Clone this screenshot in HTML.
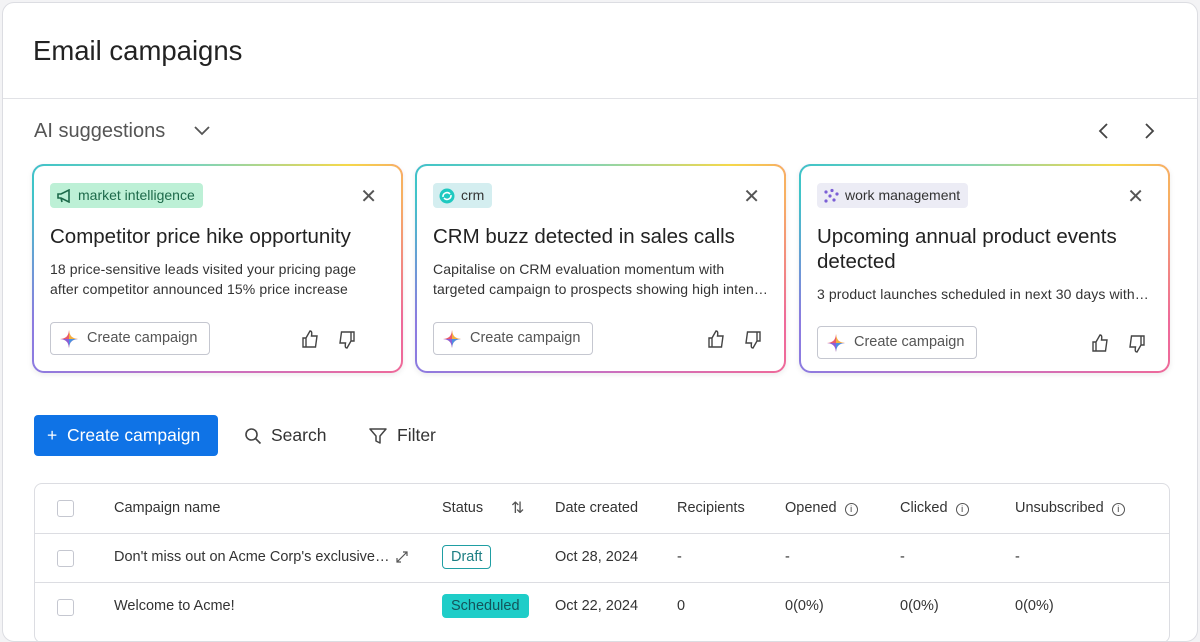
<!DOCTYPE html>
<html><head><meta charset="utf-8"><style>
*{box-sizing:border-box;margin:0;padding:0}
body{width:1200px;height:628px;background:#f3f3f5;font-family:"Liberation Sans",sans-serif;color:#323338;overflow:hidden;position:relative}
.frame{position:absolute;left:2px;top:2px;width:1196px;height:640px;background:#fff;border:1px solid #dcdde2;border-radius:12px;overflow:hidden}
.abs{position:absolute}
h1{position:absolute;left:30px;top:32px;font-size:27.5px;font-weight:400;color:#222}
.hr{position:absolute;left:0;top:95px;width:100%;height:1px;background:#e1e2e6}
.ai{left:31px;top:117px;font-size:20px;color:#555}
.card{position:absolute;top:161px;width:371px;height:209px;border-radius:12px;padding:2px;background:linear-gradient(90deg,#8c7be0,#c86fc0 50%,#ee6a9a);box-shadow:0 2px 6px rgba(0,0,0,.08)}
.card::before{content:"";position:absolute;inset:0;border-radius:12px;background:linear-gradient(90deg,#3fc4c8 0%,#7fd4b8 45%,#f5d84a 85%,#f7b062 100%);-webkit-mask-image:linear-gradient(180deg,#000 15%,transparent 75%);mask-image:linear-gradient(180deg,#000 15%,transparent 75%)}
.in{position:relative;background:#fff;border-radius:10px;width:100%;height:100%}
.tag{position:absolute;left:16px;top:17px;height:25px;border-radius:4px;padding:0 8px 0 6px;font-size:14px;line-height:25px;display:flex;align-items:center;gap:6px}
.x{position:absolute;right:24px;top:18px;font-size:20px;color:#555}
.ttl{position:absolute;left:16px;top:58px;font-size:20.5px;color:#222;width:345px;line-height:25px}
.dsc{position:absolute;left:16px;font-size:14px;line-height:20px;color:#333;white-space:nowrap;letter-spacing:.1px}
.btn{position:absolute;left:16px;height:33px;border:1px solid #c5c7d0;border-radius:4px;padding:0 12px 0 36px;font-size:14.5px;line-height:31px;color:#555}
.star{position:absolute;left:9px;top:7px}
.tb{position:absolute;left:31px;top:480px;width:1136px;height:160px;border:1px solid #dcdde2;border-radius:8px}
.row{position:absolute;left:0;width:100%;border-top:1px solid #dcdde2}
.cb{position:absolute;left:22px;width:17px;height:17px;border:1px solid #c5c7d0;border-radius:3px}
.c{position:absolute;font-size:14.5px;color:#333}
.i{border:1.3px solid #555;border-radius:50%;display:inline-block;width:13px;height:13px;line-height:11px;text-align:center;font-size:9px;margin-left:4px}
</style></head><body><div class="frame">
<h1>Email campaigns</h1>
<div class="hr"></div>
<div class="abs ai">AI suggestions</div>
<svg class="abs" style="left:190px;top:120px" width="18" height="14"><path d="M2 4l7 7 7-7" fill="none" stroke="#555" stroke-width="1.8"/></svg>
<svg class="abs" style="left:1094px;top:118px" width="14" height="20"><path d="M10 3l-7 7 7 7" fill="none" stroke="#444" stroke-width="1.8"/></svg>
<svg class="abs" style="left:1139px;top:118px" width="14" height="20"><path d="M4 3l7 7-7 7" fill="none" stroke="#444" stroke-width="1.8"/></svg>

<div class="card" style="left:29px"><div class="in">
<div class="tag" style="background:#bdf0d6;color:#1d6a4a"><svg width="16" height="14"><path d="M2 5h3l8-4v12l-8-4H2z M5 9l1 4" fill="none" stroke="#1d6a4a" stroke-width="1.6"/></svg>market intelligence</div>
<div class="x">✕</div>
<div class="ttl">Competitor price hike opportunity</div>
<div class="dsc" style="top:93px">18 price-sensitive leads visited your pricing page<br>after competitor announced 15% price increase</div>
<div class="btn" style="top:156px"><svg class="star" width="18" height="18"><path d="M9 0C9.5 6 12 8.5 18 9 12 9.5 9.5 12 9 18 8.5 12 6 9.5 0 9 6 8.5 8.5 6 9 0z" fill="#e85b6c"/><path d="M9 9V0c.5 6 3 8.5 9 9z" fill="#f4b13d"/><path d="M9 9h9c-6 .5-8.5 3-9 9z" fill="#4a90e2"/><path d="M9 9v9C8.5 12 6 9.5 0 9z" fill="#8a5fd8"/></svg>Create campaign</div>
<svg class="abs" style="left:267px;top:164px" width="18" height="18"><path d="M2 8h3v9H2z M5 8l4-7c2 0 2 2 1.5 5H16l-1.5 11H5" fill="none" stroke="#444" stroke-width="1.4"/></svg>
<svg class="abs" style="left:304px;top:165px" width="18" height="18"><path d="M16 10h-3V1h3z M13 10l-4 7c-2 0-2-2-1.5-5H2L3.5 1H13" fill="none" stroke="#444" stroke-width="1.4"/></svg>
</div></div>

<div class="card" style="left:412px"><div class="in">
<div class="tag" style="background:#d4eef0;color:#333"><svg width="16" height="16"><circle cx="8" cy="8" r="7.5" fill="#1fc9c0"/><path d="M4 9a4 4 0 0 1 7-3M12 7a4 4 0 0 1-7 3" stroke="#fff" stroke-width="1.6" fill="none"/></svg>crm</div>
<div class="x">✕</div>
<div class="ttl">CRM buzz detected in sales calls</div>
<div class="dsc" style="top:93px">Capitalise on CRM evaluation momentum with<br>targeted campaign to prospects showing high inten…</div>
<div class="btn" style="top:156px"><svg class="star" width="18" height="18"><path d="M9 0C9.5 6 12 8.5 18 9 12 9.5 9.5 12 9 18 8.5 12 6 9.5 0 9 6 8.5 8.5 6 9 0z" fill="#e85b6c"/><path d="M9 9V0c.5 6 3 8.5 9 9z" fill="#f4b13d"/><path d="M9 9h9c-6 .5-8.5 3-9 9z" fill="#4a90e2"/><path d="M9 9v9C8.5 12 6 9.5 0 9z" fill="#8a5fd8"/></svg>Create campaign</div>
<svg class="abs" style="left:290px;top:164px" width="18" height="18"><path d="M2 8h3v9H2z M5 8l4-7c2 0 2 2 1.5 5H16l-1.5 11H5" fill="none" stroke="#444" stroke-width="1.4"/></svg>
<svg class="abs" style="left:327px;top:165px" width="18" height="18"><path d="M16 10h-3V1h3z M13 10l-4 7c-2 0-2-2-1.5-5H2L3.5 1H13" fill="none" stroke="#444" stroke-width="1.4"/></svg>
</div></div>

<div class="card" style="left:796px"><div class="in">
<div class="tag" style="background:#ececf5;color:#333"><svg width="16" height="16" fill="#7b5fd6"><circle cx="3" cy="4" r="1.6"/><circle cx="9" cy="2.5" r="1.6"/><circle cx="14" cy="6" r="1.6"/><circle cx="7" cy="8" r="1.6"/><circle cx="3" cy="13" r="1.6"/><circle cx="11" cy="12" r="1.6"/></svg>work management</div>
<div class="x">✕</div>
<div class="ttl">Upcoming annual product events detected</div>
<div class="dsc" style="top:118px">3 product launches scheduled in next 30 days with…</div>
<div class="btn" style="top:160px"><svg class="star" width="18" height="18"><path d="M9 0C9.5 6 12 8.5 18 9 12 9.5 9.5 12 9 18 8.5 12 6 9.5 0 9 6 8.5 8.5 6 9 0z" fill="#e85b6c"/><path d="M9 9V0c.5 6 3 8.5 9 9z" fill="#f4b13d"/><path d="M9 9h9c-6 .5-8.5 3-9 9z" fill="#4a90e2"/><path d="M9 9v9C8.5 12 6 9.5 0 9z" fill="#8a5fd8"/></svg>Create campaign</div>
<svg class="abs" style="left:290px;top:168px" width="18" height="18"><path d="M2 8h3v9H2z M5 8l4-7c2 0 2 2 1.5 5H16l-1.5 11H5" fill="none" stroke="#444" stroke-width="1.4"/></svg>
<svg class="abs" style="left:327px;top:169px" width="18" height="18"><path d="M16 10h-3V1h3z M13 10l-4 7c-2 0-2-2-1.5-5H2L3.5 1H13" fill="none" stroke="#444" stroke-width="1.4"/></svg>
</div></div>

<div class="abs" style="left:31px;top:412px;width:184px;height:41px;background:#0f73e6;border-radius:4px;color:#fff;font-size:17.5px;line-height:41px;padding-left:13px">+&nbsp; Create campaign</div>
<svg class="abs" style="left:241px;top:424px" width="18" height="18"><circle cx="7.5" cy="7.5" r="5.5" fill="none" stroke="#444" stroke-width="1.6"/><path d="M11.5 11.5l5 5" stroke="#444" stroke-width="1.6"/></svg>
<div class="abs" style="left:268px;top:422px;font-size:17.5px;color:#333">Search</div>
<svg class="abs" style="left:366px;top:424px" width="18" height="18"><path d="M1 2h16l-6 7v7l-4-2V9z" fill="none" stroke="#444" stroke-width="1.5" stroke-linejoin="round"/></svg>
<div class="abs" style="left:394px;top:422px;font-size:17.5px;color:#333">Filter</div>

<div class="tb">
<div class="cb" style="top:16px"></div>
<div class="c" style="left:79px;top:16px">Campaign name</div>
<div class="c" style="left:407px;top:16px">Status</div>
<div class="c" style="left:476px;top:14px;font-size:16px;color:#555">⇅</div>
<div class="c" style="left:520px;top:16px">Date created</div>
<div class="c" style="left:642px;top:16px">Recipients</div>
<div class="c" style="left:750px;top:16px">Opened <span class="i">i</span></div>
<div class="c" style="left:865px;top:16px">Clicked <span class="i">i</span></div>
<div class="c" style="left:980px;top:16px">Unsubscribed <span class="i">i</span></div>
<div class="row" style="top:49px;height:49px">
<div class="cb" style="top:16px"></div>
<div class="c" style="left:79px;top:15px">Don't miss out on Acme Corp's exclusive…</div>
<svg class="abs" style="left:360px;top:16px" width="14" height="14"><path d="M2 12l10-10M8 2h4v4M2 8v4h4" fill="none" stroke="#555" stroke-width="1.2"/></svg>
<div class="c" style="left:407px;top:11px;border:1px solid #1f9ea3;border-radius:4px;padding:3px 8px;color:#1d7e83">Draft</div>
<div class="c" style="left:520px;top:15px">Oct 28, 2024</div>
<div class="c" style="left:642px;top:15px">-</div><div class="c" style="left:750px;top:15px">-</div><div class="c" style="left:865px;top:15px">-</div><div class="c" style="left:980px;top:15px">-</div>
</div>
<div class="row" style="top:98px;height:49px">
<div class="cb" style="top:16px"></div>
<div class="c" style="left:79px;top:15px">Welcome to Acme!</div>
<div class="c" style="left:407px;top:11px;background:#1fcdc8;border-radius:4px;padding:4px 9px;color:#14545a">Scheduled</div>
<div class="c" style="left:520px;top:15px">Oct 22, 2024</div>
<div class="c" style="left:642px;top:15px">0</div><div class="c" style="left:750px;top:15px">0(0%)</div><div class="c" style="left:865px;top:15px">0(0%)</div><div class="c" style="left:980px;top:15px">0(0%)</div>
</div>
</div>
</div></body></html>
